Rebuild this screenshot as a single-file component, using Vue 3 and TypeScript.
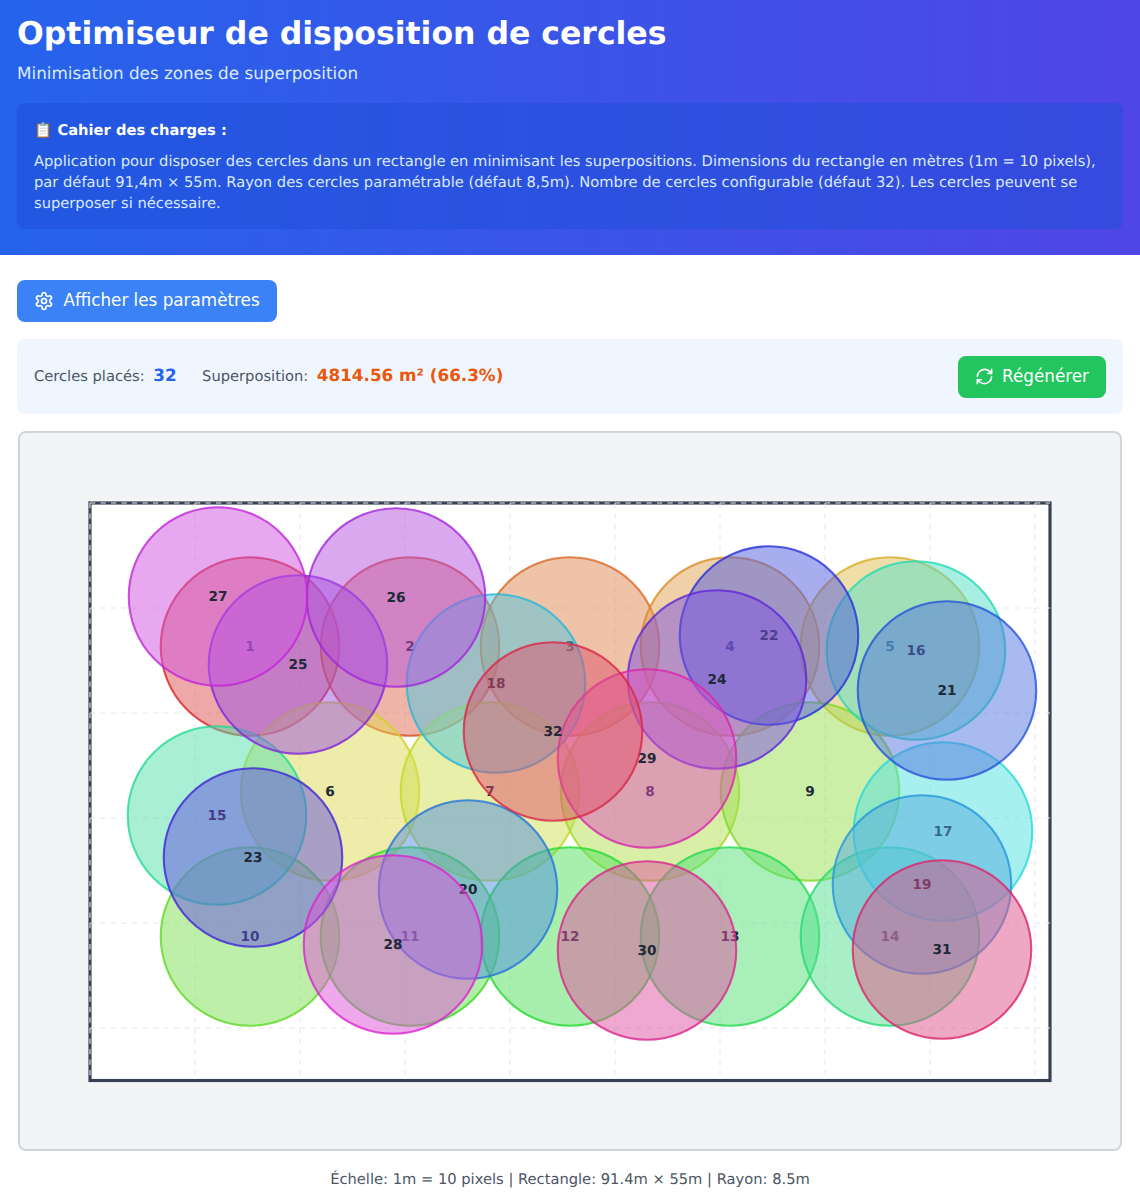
<template>
  <div class="app">
    <header class="header">
      <h1>Optimiseur de disposition de cercles</h1>
      <p class="subtitle">Minimisation des zones de superposition</p>
      <div class="specs">
        <h3>📋 Cahier des charges :</h3>
        <p>
          Application pour disposer des cercles dans un rectangle en minimisant les superpositions. Dimensions du rectangle en mètres (1m = 10 pixels), par défaut 91,4m × 55m. Rayon des cercles paramétrable (défaut 8,5m). Nombre de cercles configurable (défaut 32). Les cercles peuvent se superposer si nécessaire.
        </p>
      </div>
    </header>

    <main class="content">
      <button class="btn btn-blue" type="button">
        <svg class="icon" viewBox="0 0 24 24">
          <path d="M12.22 2h-.44a2 2 0 0 0-2 2v.18a2 2 0 0 1-1 1.73l-.43.25a2 2 0 0 1-2 0l-.15-.08a2 2 0 0 0-2.73.73l-.22.38a2 2 0 0 0 .73 2.73l.15.1a2 2 0 0 1 1 1.72v.51a2 2 0 0 1-1 1.74l-.15.09a2 2 0 0 0-.73 2.73l.22.38a2 2 0 0 0 2.73.73l.15-.08a2 2 0 0 1 2 0l.43.25a2 2 0 0 1 1 1.73V20a2 2 0 0 0 2 2h.44a2 2 0 0 0 2-2v-.18a2 2 0 0 1 1-1.73l.43-.25a2 2 0 0 1 2 0l.15.08a2 2 0 0 0 2.73-.73l.22-.39a2 2 0 0 0-.73-2.73l-.15-.08a2 2 0 0 1-1-1.74v-.5a2 2 0 0 1 1-1.74l.15-.09a2 2 0 0 0 .73-2.73l-.22-.38a2 2 0 0 0-2.73-.73l-.15.08a2 2 0 0 1-2 0l-.43-.25a2 2 0 0 1-1-1.73V4a2 2 0 0 0-2-2z" />
          <circle cx="12" cy="12" r="3" />
        </svg>
        <span class="btn-text">Afficher les paramètres</span>
      </button>

      <div class="stats">
        <div class="stat-group">
          <span class="stat">
            <span class="label">Cercles placés:</span>
            <strong class="count">{{ circles.length }}</strong>
          </span>
          <span class="stat">
            <span class="label">Superposition:</span>
            <strong class="overlap">4814.56 m² (66.3%)</strong>
          </span>
        </div>
        <button class="btn btn-green" type="button">
          <svg class="icon" viewBox="0 0 24 24">
            <path d="M3 12a9 9 0 0 1 9-9 9.75 9.75 0 0 1 6.74 2.74L21 8" />
            <path d="M21 3v5h-5" />
            <path d="M21 12a9 9 0 0 1-9 9 9.75 9.75 0 0 1-6.74-2.74L3 16" />
            <path d="M8 16H3v5" />
          </svg>
          <span class="btn-text">Régénérer</span>
        </button>
      </div>

      <div class="stage">
        <svg class="field" :width="fieldW" :height="fieldH" :viewBox="`0 0 ${fieldW} ${fieldH}`">
          <rect :width="fieldW" :height="fieldH" fill="#fff" stroke="#374151" stroke-width="3.15" />
          <line
            v-for="x in gridX"
            :key="`x${x}`"
            :x1="x"
            :x2="x"
            y1="0"
            :y2="fieldH"
            class="grid-line"
          />
          <line
            v-for="y in gridY"
            :key="`y${y}`"
            x1="0"
            :x2="fieldW"
            :y1="y"
            :y2="y"
            class="grid-line"
          />
          <g v-for="c in circles" :key="c.id">
            <circle :cx="c.x" :cy="c.y" :r="radius" :fill="c.fill" :stroke="c.stroke" stroke-width="2.1" />
            <text :x="c.x" :y="c.y + 0.7" class="num" text-anchor="middle" dominant-baseline="middle">{{ c.id }}</text>
          </g>
        </svg>
      </div>

      <p class="scale">Échelle: 1m = 10 pixels | Rectangle: 91.4m × 55m | Rayon: 8.5m</p>
    </main>
  </div>
</template>

<script setup lang="ts">
const fieldW = 960
const fieldH = 577.5
const radius = 89.25

const gridX = Array.from({ length: 10 }, (_, i) => i * 105)
const gridY = Array.from({ length: 6 }, (_, i) => i * 105)

// centres in px, relative to the rectangle's top left corner
const centres: [number, number][] = [
  [160, 143.5], [320, 143.5], [480, 143.5], [640, 143.5], [800, 143.5],
  [240, 288.5], [400, 288.5], [560, 288.5], [720, 288.5],
  [160, 433.5], [320, 433.5], [480, 433.5], [640, 433.5], [800, 433.5],
  [127, 312.5], [826, 147.5], [853, 328.5], [406, 180.5], [832, 381.5],
  [378, 386.5], [857, 187.5], [679, 132.5], [163, 354.5], [627, 176.5],
  [208, 161.5], [306, 94.5], [128, 93.5], [303, 441.5], [557, 255.5],
  [557, 447.5], [852, 446.5], [463, 228.5]
]

const circles = centres.map(([x, y], i) => {
  const hue = (i * 360) / 32
  return {
    id: i + 1,
    x,
    y,
    fill: `hsla(${hue}, 70%, 60%, 0.5)`,
    stroke: `hsla(${hue}, 70%, 50%, 0.8)`
  }
})
</script>

<style>
body {
  margin: 0;
  background: #fff;
}
</style>

<style scoped>
.app {
  font-family: "DejaVu Sans", sans-serif;
  color: #1f2937;
  text-rendering: geometricPrecision;
}

.header {
  height: 255px;
  box-sizing: border-box;
  padding: 18px 17px 17px;
  background: linear-gradient(90deg, #2563eb, #4f46e5);
  color: #fff;
}

.header h1 {
  margin: 0;
  font-size: 31.5px;
  line-height: 33px;
  font-weight: 700;
}

.subtitle {
  margin: 11px 0 0;
  font-size: 16.8px;
  line-height: 22px;
  color: #dbeafe;
}

.specs {
  margin-top: 19px;
  padding: 17px;
  height: 126px;
  box-sizing: border-box;
  border-radius: 8px;
  background: rgba(29, 78, 216, 0.5);
}

.specs h3 {
  margin: 0 0 9.5px;
  font-size: 14.7px;
  line-height: 21px;
  font-weight: 700;
}

.specs p {
  margin: 0;
  font-size: 14.7px;
  line-height: 21px;
  color: #dbeafe;
}

.content {
  padding: 25px 17px 0;
}

.btn {
  display: inline-flex;
  align-items: center;
  height: 42px;
  padding: 0 17px;
  border: 0;
  border-radius: 8px;
  color: #fff;
  font-family: inherit;
  font-size: 16.8px;
  line-height: 20px;
}

.btn-text {
  padding-bottom: 2px;
}

.btn-blue {
  gap: 9.5px;
  background: #3b82f6;
}

.btn-blue .icon {
  width: 20px;
  height: 20px;
}

.btn-green {
  gap: 8px;
  background: #22c55e;
}

.icon {
  width: 19px;
  height: 19px;
  fill: none;
  stroke: currentColor;
  stroke-width: 2;
  stroke-linecap: round;
  stroke-linejoin: round;
}

.stats {
  display: flex;
  align-items: center;
  justify-content: space-between;
  margin-top: 17px;
  padding: 16.5px 17px;
  border-radius: 8px;
  background: #eff6ff;
}

.stat-group {
  display: flex;
  gap: 25.5px;
  padding-bottom: 3px;
}

.stat {
  display: flex;
  align-items: baseline;
  gap: 8.6px;
}

.label {
  font-size: 14.7px;
  color: #4b5563;
}

.count,
.overlap {
  font-size: 16.8px;
  font-weight: 700;
}

.count {
  color: #2563eb;
}

.overlap {
  color: #ea580c;
}

.stage {
  display: flex;
  justify-content: center;
  align-items: center;
  height: 720px;
  box-sizing: border-box;
  margin: 17px 1px 0;
  padding-top: 1px;
  border: 2px solid #d1d5db;
  border-radius: 8px;
  background: #f3f4f6;
}

.field {
  display: block;
  overflow: visible;
}

.grid-line {
  stroke: #e5e7eb;
  stroke-width: 1.05;
  stroke-dasharray: 5.25 5.25;
}

.num {
  font-size: 13.65px;
  font-weight: 700;
  fill: #1f2937;
}

.scale {
  margin: 18.5px 0 0;
  text-align: center;
  font-size: 14.7px;
  line-height: 20px;
  color: #4b5563;
}
</style>
